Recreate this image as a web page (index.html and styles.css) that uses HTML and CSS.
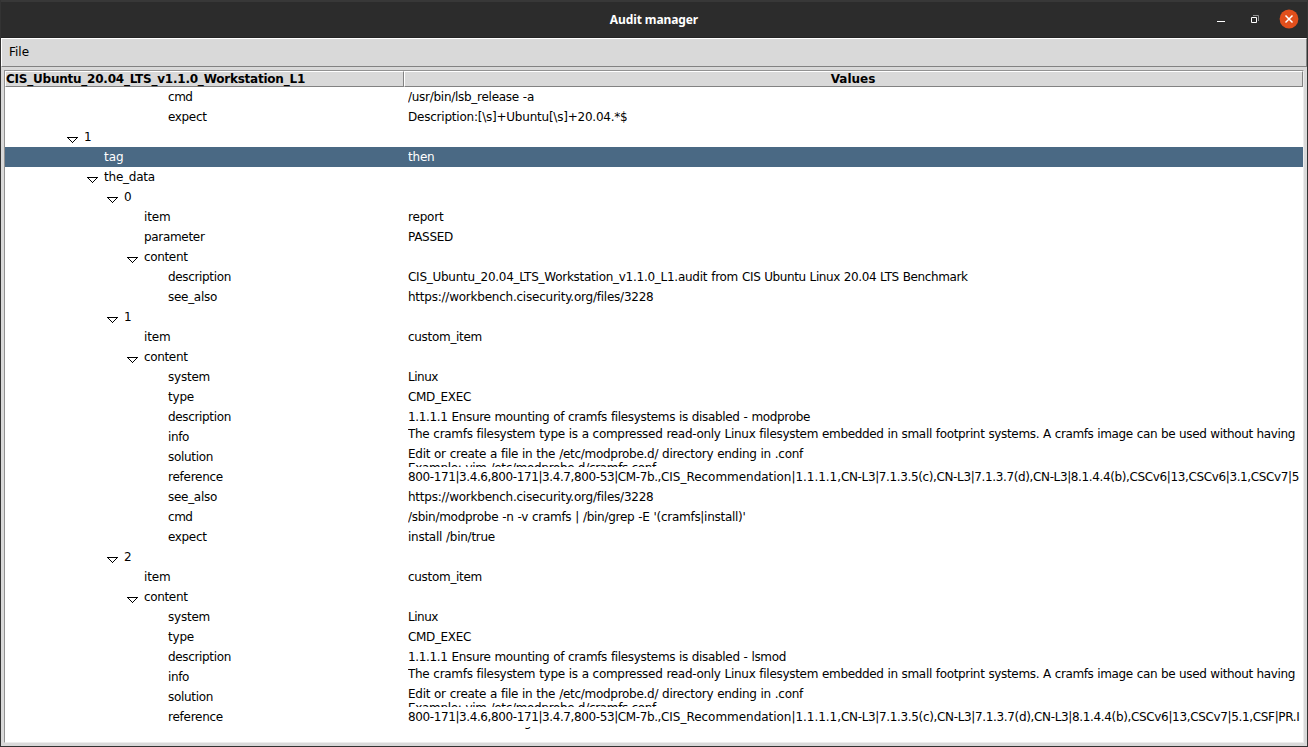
FILE: index.html
```html
<!DOCTYPE html>
<html lang="en">
<head>
<meta charset="utf-8">
<title>Audit manager</title>
<link rel="stylesheet" href="styles.css">
</head>
<body>
<div class="window">
  <header class="titlebar">
    <h1 class="title">Audit manager</h1>
    <div class="controls">
      <svg class="ctl" width="20" height="20" viewBox="0 0 20 20"><path d="M6 12h8v1H6z" fill="#fff"/></svg>
      <svg class="ctl" width="20" height="20" viewBox="0 0 20 20" fill="none"><path d="M8 6.5h5.5V12" stroke="#929292"/><path d="M6.5 8.5h5v5h-5z" stroke="#fff"/></svg>
      <svg class="ctl" width="20" height="20" viewBox="0 0 20 20"><circle cx="10" cy="10" r="9.4" fill="#e14f1c"/><path d="M6.5 6.5l7 7M13.5 6.5l-7 7" stroke="#fff" stroke-width="1.5"/></svg>
    </div>
  </header>
  <div class="client">
    <nav class="menubar"><span class="menu">File</span></nav>
    <main class="tree">
      <div class="head"><div class="th"><span data-w="299">CIS_Ubuntu_20.04_LTS_v1.1.0_Workstation_L1</span></div><div class="th values">Values</div></div>
      <div class="rows" id="rows"></div>
    </main>
  </div>
</div>
<script src="tree.js"></script>
</body>
</html>
```
FILE: styles.css
```css
* { box-sizing: border-box; }
body { margin: 0; background: #2c2c2c; font: 12px/14px "DejaVu Sans", sans-serif; color: #000; }
.window { width: 1308px; height: 747px; display: flex; flex-direction: column; padding: 0 1px 1px; background: #333; overflow: hidden; }
.titlebar { height: 38px; flex: none; display: grid; grid-template-columns: 1fr auto 1fr; align-items: start; padding-top: 7px; background: #2c2c2c; border-top: 2px solid #383838; border-bottom: 1px solid #242424; }
.title { grid-column: 2; margin: 3px 0 0; font: bold 12px/16px "Noto Sans", sans-serif; letter-spacing: -0.1px; color: #fff; }
.controls { justify-self: end; display: flex; gap: 14px; padding-right: 8px; }
.ctl { display: block; }
.client { flex: 1; min-height: 0; display: flex; flex-direction: column; background: #d9d9d9; }
.menubar { height: 29px; flex: none; border: 1px solid; border-color: #fff #828282 #828282 #fff; padding: 6px 7px; }
.menu { display: block; }
.tree { flex: 1; min-height: 0; display: flex; flex-direction: column; margin: 3px; background: #fff; border: 1px solid; border-color: #929292 #ececec #ececec #929292; overflow: hidden; }
.head { height: 16px; flex: none; display: grid; grid-template-columns: 399px 1fr; font-weight: bold; }
.th { background: #d9d9d9; border: 1px solid; border-color: #fff #828282 #828282 #fff; white-space: nowrap; line-height: 14px; }
.values { text-align: center; padding-right: 1px; }
.row { display: grid; grid-template-columns: 403px 1fr; height: 20px; overflow: hidden; }
.selected { background: #4a6984; color: #fff; }
.key { display: flex; align-items: center; }
.twisty { width: 11px; height: 6px; margin: 6px 6px 0 0; flex: none; }
.depth3 { padding-left: 62px; }
.depth4 { padding-left: 82px; }
.depth5 { padding-left: 102px; }
.depth6 { padding-left: 122px; }
.leaf4 { padding-left: 99px; }
.leaf6 { padding-left: 139px; }
.leaf7 { padding-left: 163px; }
.value { white-space: pre; padding-top: 3px; overflow: hidden; word-spacing: 0.4px; }
.multi { padding-top: 0; }
.remnant { height: 2px; overflow: hidden; display: flex; align-items: flex-end; padding-left: 519px; }
```
FILE: tree.js
```js
const info = [["The cramfs filesystem type is a compressed read-only Linux filesystem ", 414], ["embedded in small footprint systems. ", 221], ["A cramfs image can be used without having", 252]];
const solution = [["Edit or create a file in the /etc/modprobe.d/ directory ending in .conf", 395], ["\nExample: vim /etc/modprobe.d/cramfs.conf", 248]];
const refs = [["800-171|3.4.6,800-171|3.4.7,800-53|CM-7b.,", 253], ["CIS_Recommendation|1.1.1.1,", 180]];
const controls = "CN-L3|7.1.3.5(c),CN-L3|7.1.3.7(d),CN-L3|8.1.4.4(b),CSCv6|13,";
// Column widths of the key labels, in pixels
const keyWidths = { cmd: 24.5, expect: 38.5, tag: 19.5, the_data: 51, item: 26.5, parameter: 60.5, content: 43.5, description: 63, see_also: 49, system: 42, type: 26, info: 21, solution: 45, reference: 55 };
// class, key, [[text, width], ...], state
const rows = [
  ["leaf7", "cmd", [["/usr/bin/lsb_release -a", 126]]],
  ["leaf7", "expect", [["Description:[\\s]+Ubuntu[\\s]+20.04.*$", 219.5]]],
  ["depth3", "1", []],
  ["leaf4", "tag", [["then", 26.5]], "selected"],
  ["depth4", "the_data", []],
  ["depth5", "0", []],
  ["leaf6", "item", [["report", 35.5]]],
  ["leaf6", "parameter", [["PASSED", 45]]],
  ["depth6", "content", []],
  ["leaf7", "description", [["CIS_Ubuntu_20.04_LTS_Workstation_v1.1.0_L1.audit from ", 334], ["CIS Ubuntu Linux 20.04 LTS Benchmark", 225.5]]],
  ["leaf7", "see_also", [["https://workbench.cisecurity.org/files/3228", 245.5]]],
  ["depth5", "1", []],
  ["leaf6", "item", [["custom_item", 74]]],
  ["depth6", "content", []],
  ["leaf7", "system", [["Linux", 30]]],
  ["leaf7", "type", [["CMD_EXEC", 63]]],
  ["leaf7", "description", [["1.1.1.1 Ensure mounting of cramfs filesystems is disabled - modprobe", 402]]],
  ["leaf7", "info", info, "", true],
  ["leaf7", "solution", solution, "", true],
  ["leaf7", "reference", [...refs, [controls + "CSCv6|3.1,CSCv7|5", 458]]],
  ["leaf7", "see_also", [["https://workbench.cisecurity.org/files/3228", 245.5]]],
  ["leaf7", "cmd", [["/sbin/modprobe -n -v cramfs | /bin/grep -E '(cramfs|install)'", 337.5]]],
  ["leaf7", "expect", [["install /bin/true", 87]]],
  ["depth5", "2", []],
  ["leaf6", "item", [["custom_item", 74]]],
  ["depth6", "content", []],
  ["leaf7", "system", [["Linux", 30]]],
  ["leaf7", "type", [["CMD_EXEC", 63]]],
  ["leaf7", "description", [["1.1.1.1 Ensure mounting of cramfs filesystems is disabled - lsmod", 378]]],
  ["leaf7", "info", info, "", true],
  ["leaf7", "solution", solution, "", true],
  ["leaf7", "reference", [...refs, [controls + "CSCv7|5.1,CSF|PR.I", 458.5]]],
];
const twisty = '<svg class="twisty" viewBox="0 0 11 6"><path d="M0 0h11v1H0zM1 1h1v1H1zM9 1h1v1H9zM2 2h1v1H2zM8 2h1v1H8zM3 3h1v1H3zM7 3h1v1H7zM4 4h1v1H4zM6 4h1v1H6zM5 5h1v1H5z"/></svg>';
const fitted = (text, width) => (text[0] === "\n" ? "\n" : "") + (width ? `<span data-w="${width}">${text.replace("\n", "")}</span>` : `<span>${text}</span>`);
document.getElementById("rows").innerHTML = rows.map(([cls, key, parts, state, multi]) =>
  `<div class="row ${state || ""}"><div class="key ${cls}">${cls.startsWith("depth") ? twisty : ""}${fitted(key, keyWidths[key])}</div><div class="value ${multi ? "multi" : ""}">${parts.map(p => fitted(...p)).join("")}</div></div>`
).join("") + '<div class="remnant">g</div>';
// Track each label so that it fills its width
document.querySelectorAll("[data-w]").forEach(el => {
  const gap = el.dataset.w - el.getBoundingClientRect().width;
  el.style.letterSpacing = gap / el.textContent.length + "px";
  // Tracking turns ligatures off, so settle the small remainder
  const rest = el.dataset.w - el.getBoundingClientRect().width;
  el.style.letterSpacing = (gap + rest) / el.textContent.length + "px";
});
```
